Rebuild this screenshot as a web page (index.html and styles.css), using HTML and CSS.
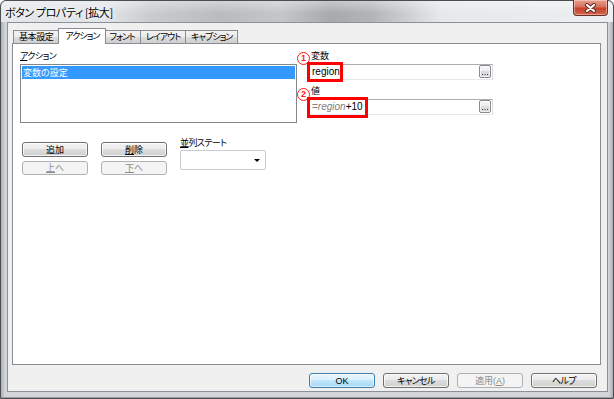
FILE: index.html
```html
<!DOCTYPE html>
<html lang="ja">
<head>
<meta charset="utf-8">
<title>ボタン プロパティ [拡大]</title>
<link rel="stylesheet" href="styles.css">
</head>
<body>
<div class="window">
  <div class="titlebar">
    <span class="title">ボタン プロパティ [拡大]</span>
    <span class="close">
      <svg width="13" height="10" viewBox="0 0 13 10">
        <path d="M3 2 L10 8 M10 2 L3 8" stroke="#5a2a22" stroke-width="4" stroke-linecap="round"/>
        <path d="M3 2 L10 8 M10 2 L3 8" stroke="#ffffff" stroke-width="2.2" stroke-linecap="round"/>
      </svg>
    </span>
  </div>
  <div class="client">
    <div class="tabs">
      <div class="tab">基本設定</div>
      <div class="tab active">アクション</div>
      <div class="tab">フォント</div>
      <div class="tab">レイアウト</div>
      <div class="tab">キャプション</div>
    </div>
    <div class="panel">
      <div class="top">
        <div class="col-left">
          <div class="label kana"><u>ア</u>クション</div>
          <div class="listbox">
            <div class="item selected">変数の設定</div>
          </div>
        </div>
        <div class="col-right">
          <div class="label flabel"><span class="num n1">1</span>変数</div>
          <div class="field">
            <span class="val">region</span>
            <span class="mark m1"></span>
            <span class="ellip"><svg width="10" height="11" viewBox="0 0 10 11"><rect x="2" y="8" width="1" height="1" fill="#444"/><rect x="4.5" y="8" width="1" height="1" fill="#444"/><rect x="7" y="8" width="1" height="1" fill="#444"/></svg></span>
          </div>
          <div class="label flabel second"><span class="num n2">2</span>値</div>
          <div class="field">
            <span class="val"><span class="g">=</span><i class="g">region</i>+10</span>
            <span class="mark m2"></span>
            <span class="ellip"><svg width="10" height="11" viewBox="0 0 10 11"><rect x="2" y="8" width="1" height="1" fill="#444"/><rect x="4.5" y="8" width="1" height="1" fill="#444"/><rect x="7" y="8" width="1" height="1" fill="#444"/></svg></span>
          </div>
        </div>
      </div>
      <div class="bottom">
        <div class="btncol">
          <button class="btn">追加</button>
          <button class="btn disabled"><u>上</u>へ</button>
        </div>
        <div class="btncol">
          <button class="btn"><u>削</u>除</button>
          <button class="btn disabled"><u>下</u>へ</button>
        </div>
        <div class="statecol">
          <div class="slabel kana"><u>並</u>列ステート</div>
          <div class="combo"><span class="arrow"></span></div>
        </div>
      </div>
    </div>
    <div class="footer">
      <button class="btn fbtn default">OK</button>
      <button class="btn fbtn kana">キャンセル</button>
      <button class="btn fbtn disabled">適用(<u>A</u>)</button>
      <button class="btn fbtn kana">ヘルプ</button>
    </div>
  </div>
</div>
</body>
</html>
```

FILE: styles.css
```css
* { box-sizing: border-box; }

html, body {
  margin: 0;
  padding: 0;
  width: 614px;
  height: 399px;
  overflow: hidden;
  background: #ffffff;
}

body {
  font-family: "Liberation Sans", "Noto Sans CJK JP", sans-serif;
  font-size: 9px;
  font-feature-settings: "palt";
  color: #000;
}

.kana { letter-spacing: -0.6px; }

.window {
  width: 614px;
  height: 399px;
  display: flex;
  flex-direction: column;
  border: 1px solid #4a4e53;
  border-radius: 6px 6px 0 0;
  padding: 0 5px 6px 6px;
  background: linear-gradient(to right, #a9adb1 0, #c9cdd1 3px, #d3d6d9 5px, #d3d6d9 calc(100% - 5px), #c9cdd1 calc(100% - 3px), #a9adb1 100%);
  box-shadow: inset 0 -1px 0 #9a9ea3;
}

.titlebar {
  height: 21px;
  margin: 0 -5px 0 -6px;
  padding: 0 5px 0 4px;
  display: flex;
  align-items: flex-start;
  border-radius: 6px 6px 0 0;
  background:
    linear-gradient(to bottom, rgba(255,255,255,0.35), rgba(255,255,255,0) 60%),
    linear-gradient(to right, #e4e7ea 0, #e0e3e6 110px, #c9cccf 150px, #b9bcbf 220px, #c4c7ca 280px, #a7aaad 330px, #b2b5b8 370px, #c8cbce 400px, #e6e8ea 440px, #eceef0 100%);
}

.title {
  font-family: "Noto Sans CJK JP", sans-serif;
  font-size: 11px;
  letter-spacing: -0.4px;
  line-height: 22px;
  color: #000;
  text-shadow: 0 0 4px #fff, 0 0 8px #fff;
}

.close {
  margin-left: auto;
  margin-top: -1px;
  width: 35px;
  height: 16px;
  border: 1px solid #6b2d24;
  border-top: none;
  border-radius: 0 0 4px 4px;
  background: linear-gradient(to bottom, #e8a090 0%, #d8705d 45%, #c5412b 55%, #d2644c 100%);
  box-shadow: inset 0 0 0 1px rgba(255,220,210,0.5);
  display: flex;
  align-items: center;
  justify-content: center;
}

.client {
  flex: 1;
  display: flex;
  flex-direction: column;
  background: #f0f0f0;
  border: 1px solid #8a9097;
  padding: 5px 6px 3px 4px;
}

.tabs {
  height: 15px;
  display: flex;
  align-items: flex-end;
  padding-left: 1px;
}

.tab {
  height: 13px;
  padding: 0 5px;
  line-height: 12px;
  letter-spacing: -1px;
  border: 1px solid #898c95;
  border-bottom: none;
  margin-left: -1px;
  background: linear-gradient(to bottom, #f2f2f2 0%, #ebebeb 50%, #dddddd 50%, #cfcfcf 100%);
  white-space: nowrap;
  font-family: "Noto Sans CJK JP", sans-serif;
}

.tab:first-child { margin-left: 0; padding: 0 6px 0 5px; letter-spacing: -0.4px; }

.tab.active {
  height: 16px;
  margin: 0 -2px -1px -2px;
  padding: 0 6px;
  line-height: 14px;
  background: #ffffff;
  position: relative;
  z-index: 2;
}

.panel {
  flex: 1;
  background: #ffffff;
  border: 1px solid #898c95;
  padding: 4px 7px 0 7px;
}

.top {
  display: flex;
  gap: 11px;
}

.col-left { width: 277px; }
.col-right { width: 185px; }

.label {
  height: 16px;
  line-height: 16px;
  font-family: "Noto Sans CJK JP", sans-serif;
}

.listbox {
  height: 59px;
  border: 1px solid #828790;
  padding: 1px;
}

.item {
  height: 13px;
  line-height: 13px;
  padding-left: 1px;
  font-family: "Noto Sans CJK JP", sans-serif;
}

.item.selected {
  background: #3399ff;
  color: #ffffff;
}

.flabel {
  position: relative;
  padding-left: 3px;
}

.flabel.second {
  margin-top: 2px;
  height: 17px;
  line-height: 17px;
}

.num {
  position: absolute;
  left: -11px;
  width: 13px;
  height: 13px;
  border: 1.6px solid #ff1a1a;
  border-radius: 50%;
  color: #ff1a1a;
  font-family: "Liberation Sans", sans-serif;
  font-weight: bold;
  font-size: 9px;
  line-height: 10px;
  text-align: center;
  background: #fff;
}

.n1 { top: 4px; }
.n2 { top: 6px; }

.field {
  position: relative;
  height: 16px;
  border: 1px solid;
  border-color: #abadb3 #dbdfe6 #e3e9ef #e2e3ea;
  padding-left: 3px;
  font-family: "Liberation Sans", sans-serif;
  font-size: 10px;
  line-height: 14px;
  background: #fff;
}

.g { color: #808080; }

.mark {
  position: absolute;
  border: 3px solid #ff0000;
  top: -3px;
  left: -2px;
}

.m1 { width: 36px; height: 20px; }
.m2 { width: 61px; height: 21px; }

.ellip {
  position: absolute;
  right: 1px;
  top: 0;
  width: 12px;
  height: 13px;
  border: 1px solid #8a8a8a;
  border-radius: 2px;
  background: linear-gradient(to bottom, #f6f6f6 0%, #ececec 50%, #dedede 50%, #d2d2d2 100%);
  box-shadow: inset 0 0 0 1px rgba(255,255,255,0.7);
  display: flex;
  align-items: center;
  justify-content: center;
}

.bottom {
  margin-top: 13px;
  padding-left: 2px;
  display: flex;
  align-items: flex-start;
  gap: 13px;
}

.btncol {
  width: 66px;
  padding-top: 6px;
  display: flex;
  flex-direction: column;
  gap: 4px;
}

.btn {
  height: 15px;
  width: 100%;
  padding: 0;
  margin: 0;
  border: 1px solid #707070;
  border-radius: 3px;
  background: linear-gradient(to bottom, #f2f2f2 0%, #ebebeb 50%, #dddddd 50%, #cfcfcf 100%);
  box-shadow: inset 0 0 0 1px rgba(255,255,255,0.75);
  font-family: "Liberation Sans", "Noto Sans CJK JP", sans-serif;
  font-feature-settings: "palt";
  font-size: 9px;
  line-height: 12px;
  color: #000;
}

.btn.disabled {
  height: 14px;
  border-color: #adb2b5;
  background: #f4f4f4;
  box-shadow: none;
  color: #8c8c8c;
}

.btn.default {
  border-color: #3c7fb1;
  background: linear-gradient(to bottom, #eaf6fd 0%, #d9f0fc 50%, #bee6fd 50%, #a7d9f5 100%);
  box-shadow: inset 0 0 0 1px rgba(255,255,255,0.6);
}

.statecol { width: 86px; }

.slabel {
  height: 14px;
  line-height: 14px;
  font-family: "Noto Sans CJK JP", sans-serif;
}

.combo {
  height: 20px;
  border: 1px solid #c9ccd2;
  border-radius: 2px;
  background: #fff;
  display: flex;
  align-items: center;
  justify-content: flex-end;
  padding-right: 5px;
}

.arrow {
  width: 0;
  height: 0;
  border-left: 3px solid transparent;
  border-right: 3px solid transparent;
  border-top: 3px solid #000;
  margin-top: 1px;
}

.footer {
  margin-top: 8px;
  padding-right: 4px;
  display: flex;
  justify-content: flex-end;
  gap: 8px;
}

.fbtn {
  width: 66px;
  height: 15px;
}

.footer .btn.disabled { height: 15px; }
```
